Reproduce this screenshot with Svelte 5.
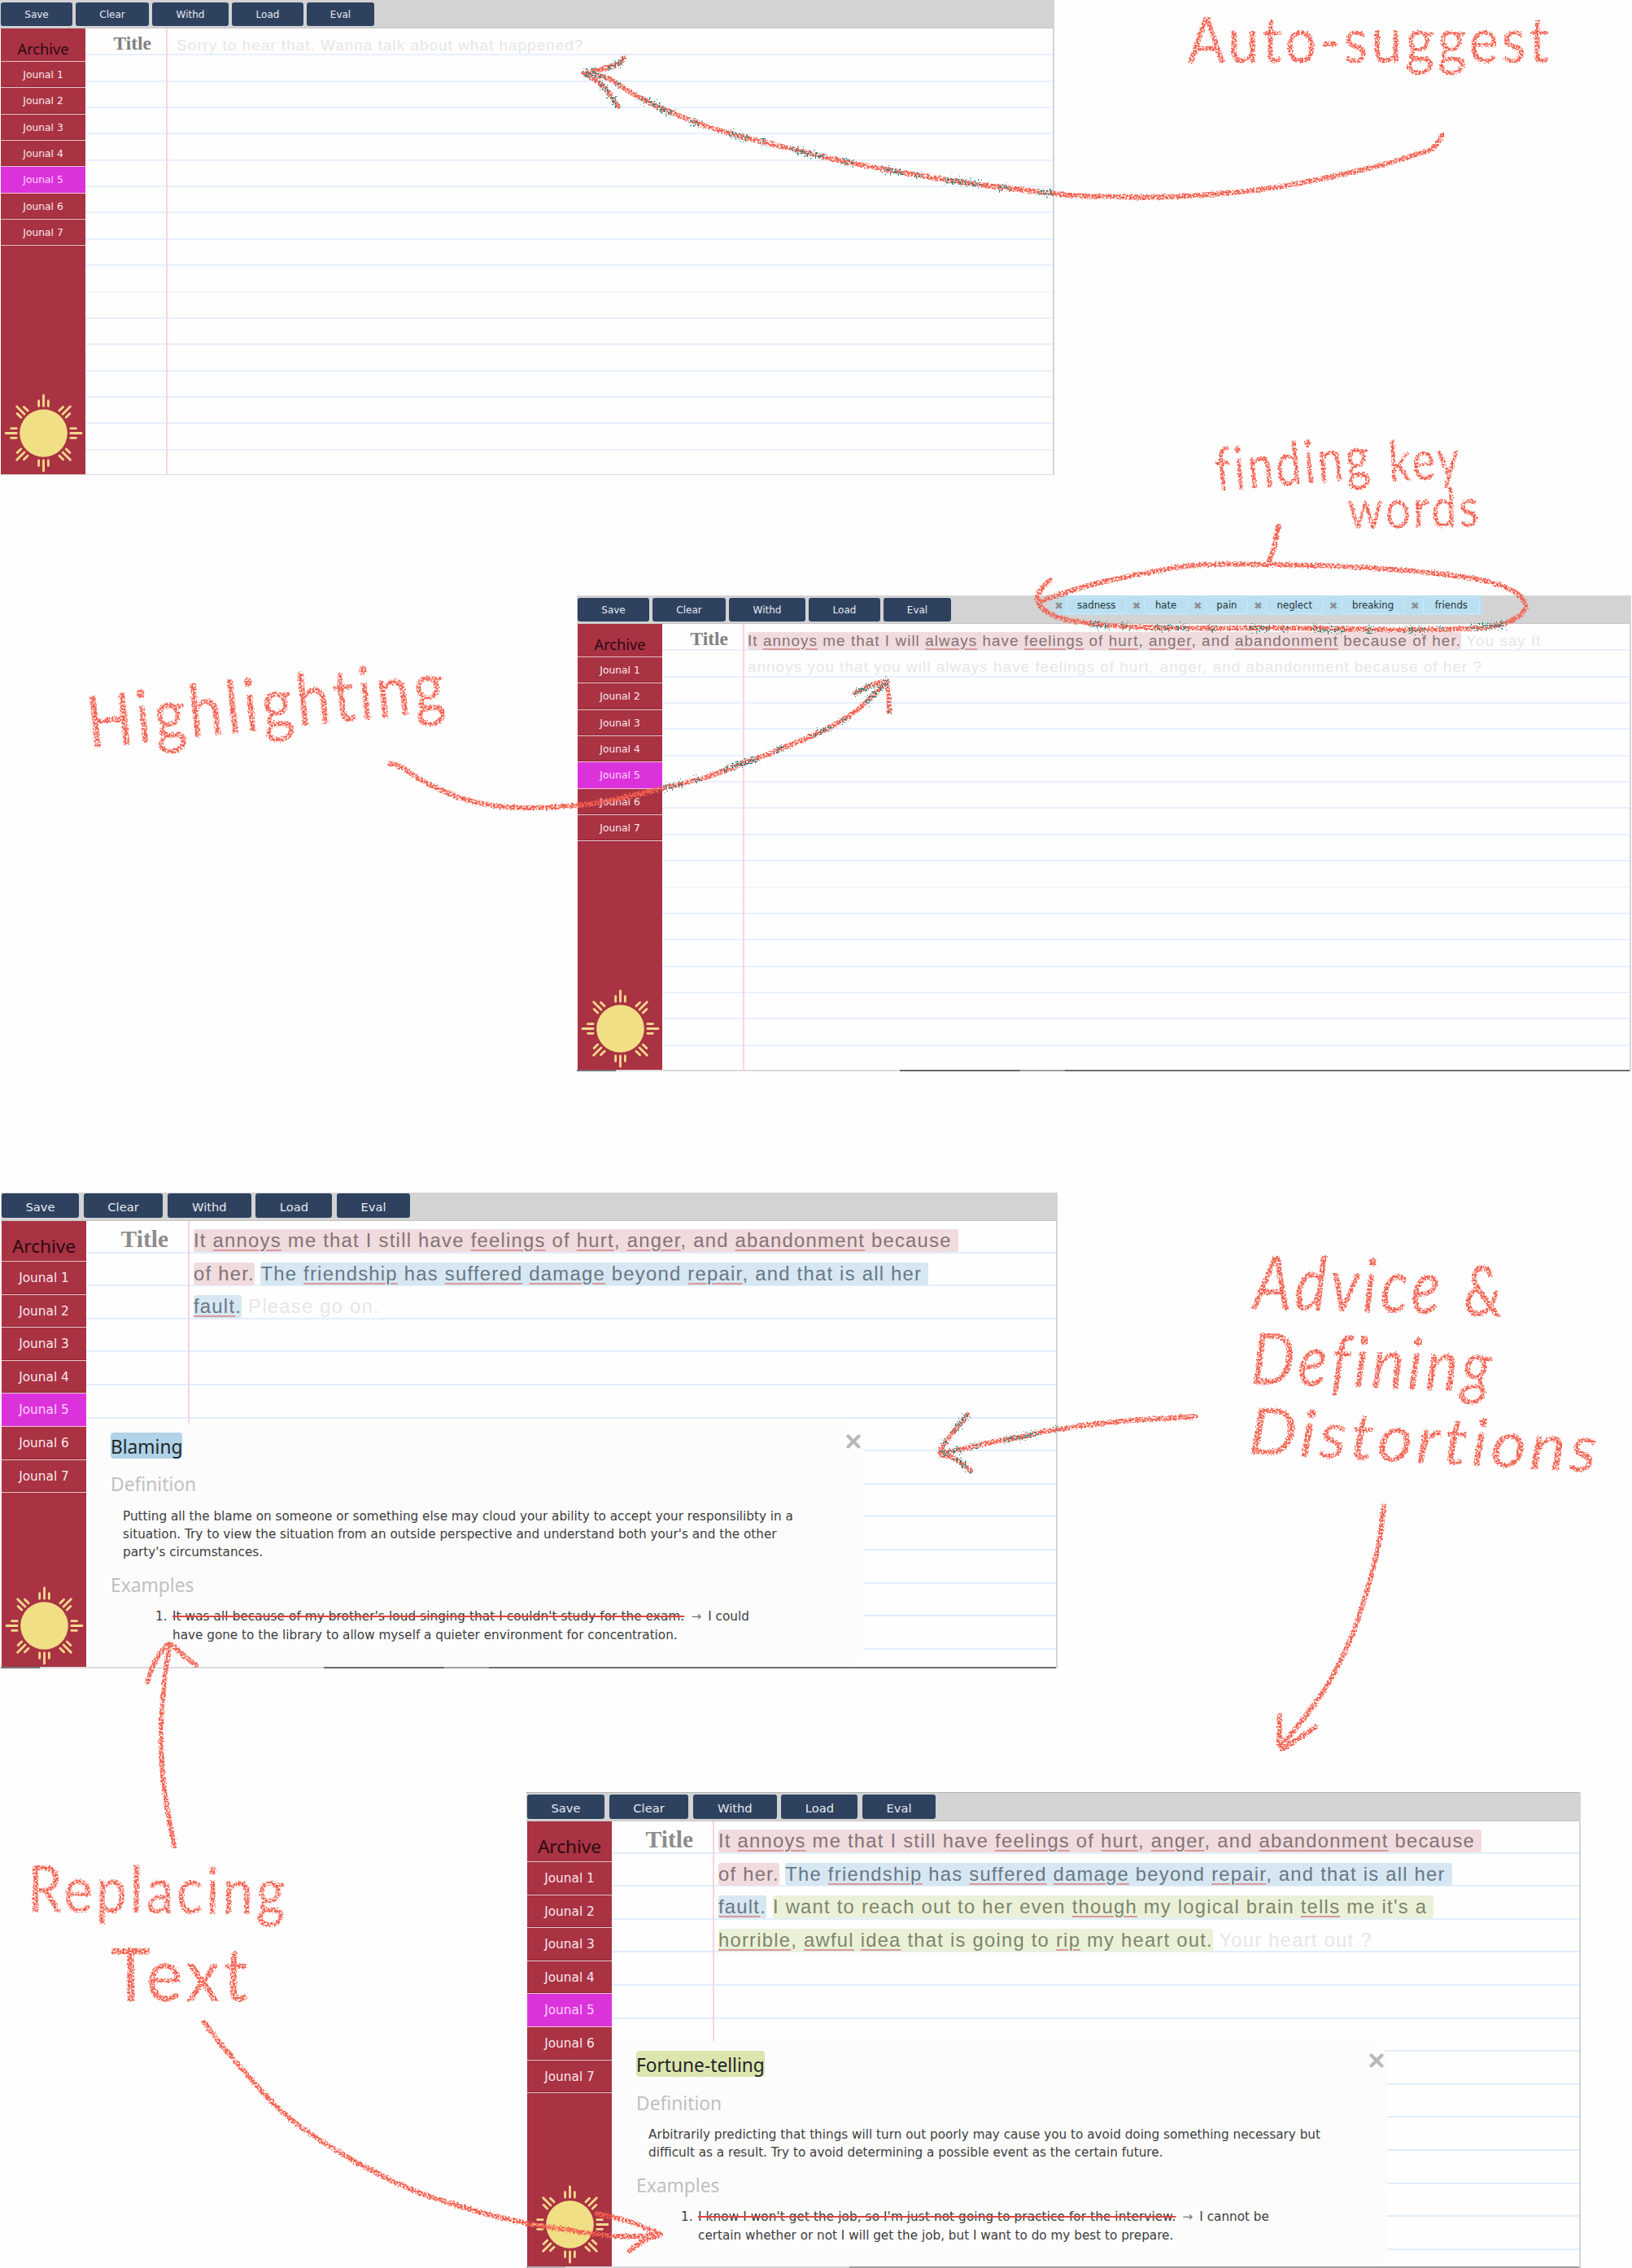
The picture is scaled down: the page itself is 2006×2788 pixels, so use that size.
<script>
  const buttons = ['Save', 'Clear', 'Withd', 'Load', 'Eval'];
  const journals = [1, 2, 3, 4, 5, 6, 7];
  const rays = [0, 45, 90, 135, 180, 225, 270, 315];

  // Words between asterisks are underlined keywords.
  const split = (text) => text.split('*').map((t, i) => ({ t, key: i % 2 === 1 }));

  const still = [
    [{ tone: 'pink', text: 'It *annoys* me that I still have *feelings* of *hurt*, *anger*, and *abandonment* because\u00a0' }],
    [
      { tone: 'pink', text: 'of her.' },
      { tone: 'blue', text: 'The *friendship* has *suffered* *damage* beyond *repair*, and that is all her\u00a0' }
    ]
  ];

  const panels = [
    {
      name: 'one',
      size: 'small',
      tags: [],
      lines: [[{ tone: 'ghost', text: 'Sorry to hear that. Wanna talk about what happened?' }]]
    },
    {
      name: 'two',
      size: 'small',
      tags: ['sadness', 'hate', 'pain', 'neglect', 'breaking', 'friends'],
      lines: [
        [
          { tone: 'pink', text: 'It *annoys* me that I will *always* have *feelings* of *hurt*, *anger*, and *abandonment* because of her.' },
          { tone: 'ghost', text: 'You say It' }
        ],
        [{ tone: 'ghost', text: 'annoys you that you will always have feelings of hurt, anger, and abandonment because of her ?' }]
      ]
    },
    {
      name: 'three',
      size: 'large',
      tags: [],
      lines: [...still, [{ tone: 'blue', text: '*fault*.' }, { tone: 'ghost', text: 'Please go on.' }]],
      advice: {
        title: 'Blaming',
        tone: 'sky',
        definition: [
          'Putting all the blame on someone or something else may cloud your ability to accept your responsilibty in a',
          "situation. Try to view the situation from an outside perspective and understand both your's and the other",
          "party's circumstances."
        ],
        wrong: "It was all because of my brother's loud singing that I couldn't study for the exam.",
        right: 'I could',
        rest: 'have gone to the library to allow myself a quieter environment for concentration.'
      }
    },
    {
      name: 'four',
      size: 'large',
      tags: [],
      lines: [
        ...still,
        [
          { tone: 'blue', text: '*fault*.' },
          { tone: 'green', text: "I want to reach out to her even *though* my logical brain *tells* me it's a\u00a0" }
        ],
        [
          { tone: 'green', text: '*horrible*, *awful* *idea* that is going to *rip* my heart out.' },
          { tone: 'ghost', text: 'Your heart out ?' }
        ]
      ],
      advice: {
        title: 'Fortune-telling',
        tone: 'lime',
        definition: [
          'Arbitrarily predicting that things will turn out poorly may cause you to avoid doing something necessary but',
          'difficult as a result. Try to avoid determining a possible event as the certain future.'
        ],
        wrong: "I know I won't get the job, so I'm just not going to practice for the interview.",
        right: 'I cannot be',
        rest: 'certain whether or not I will get the job, but I want to do my best to prepare.'
      }
    }
  ];

  // Smooth curve through a list of points (Catmull-Rom to Bezier).
  function curve(p) {
    let d = `M${p[0][0]} ${p[0][1]}`;
    for (let i = 0; i < p.length - 1; i++) {
      const a = p[i - 1] ?? p[i];
      const b = p[i];
      const c = p[i + 1];
      const e = p[i + 2] ?? c;
      d += `C${b[0] + (c[0] - a[0]) / 6} ${b[1] + (c[1] - a[1]) / 6} ${c[0] - (e[0] - b[0]) / 6} ${c[1] - (e[1] - b[1]) / 6} ${c[0]} ${c[1]}`;
    }
    return d;
  }

  const strokes = [
    [[1772, 166], [1767, 176], [1750, 187], [1673, 209], [1576, 229], [1511, 237], [1433, 242], [1340, 241], [1295, 238], [1176, 223], [1060, 203], [997, 189], [894, 163], [850, 148], [810, 132], [774, 113], [747, 96], [718, 90]],
    [[767, 71], [757, 80], [718, 90]],
    [[718, 90], [740, 105], [760, 131]],
    [[480, 939], [492, 942], [523, 962], [570, 982], [611, 991], [651, 993], [711, 990], [745, 985], [815, 969], [872, 954], [914, 938], [959, 921], [1008, 900], [1044, 880], [1070, 858], [1090, 838]],
    [[1051, 852], [1072, 842], [1090, 838]],
    [[1090, 838], [1092, 855], [1093, 875]],
    [[1571, 647], [1566, 672], [1559, 693]],
    [[1291, 713], [1280, 724], [1276, 740], [1298, 758], [1356, 768], [1443, 772], [1587, 772], [1732, 774], [1828, 771], [1866, 758], [1875, 743], [1857, 725], [1804, 710], [1684, 698], [1559, 694], [1467, 695], [1395, 707], [1337, 720], [1281, 738]],
    [[1470, 1741], [1440, 1743], [1370, 1748], [1300, 1757], [1256, 1766], [1220, 1773], [1156, 1787]],
    [[1189, 1739], [1163, 1772], [1156, 1787], [1174, 1793], [1193, 1808]],
    [[1701, 1851], [1694, 1902], [1675, 1973], [1653, 2031], [1624, 2083], [1575, 2147]],
    [[1573, 2109], [1573, 2130], [1575, 2149], [1596, 2137], [1617, 2123]],
    [[214, 2269], [202, 2201], [198, 2126], [203, 2060], [208, 2026]],
    [[181, 2068], [190, 2044], [207, 2021], [223, 2033], [241, 2047]],
    [[251, 2486], [286, 2530], [349, 2598], [421, 2648], [505, 2691], [589, 2719], [648, 2733], [698, 2741], [756, 2749], [812, 2747]],
    [[734, 2721], [774, 2731], [812, 2747]],
    [[812, 2747], [792, 2754], [774, 2767]]
  ];

  // Darker flecks where strokes run over paper.
  const flecks = [
    [[767, 71], [757, 80], [718, 90], [740, 105], [760, 131]],
    [[718, 90], [747, 96], [774, 113], [810, 132], [850, 148], [894, 163], [997, 189], [1060, 203], [1176, 223], [1295, 238]],
    [[815, 969], [872, 954], [914, 938], [959, 921], [1008, 900], [1044, 880], [1070, 858], [1090, 838]],
    [[1051, 852], [1072, 842], [1090, 838], [1093, 875]],
    [[1340, 768], [1443, 772], [1587, 773], [1732, 775], [1850, 768]],
    [[1189, 1739], [1161, 1772], [1156, 1787], [1174, 1793], [1193, 1808]],
    [[1156, 1787], [1220, 1773], [1256, 1766], [1300, 1757]]
  ];

  const notes = [
    { t: 'Auto-suggest', x: 1460, y: 77, w: 448, s: 77, r: 0 },
    { t: 'Highlighting', x: 110, y: 920, w: 446, s: 90, r: -6 },
    { t: 'finding', x: 1496, y: 604, w: 193, s: 74, r: -5 },
    { t: 'key', x: 1708, y: 592, w: 90, s: 68, r: -3 },
    { t: 'words', x: 1657, y: 650, w: 164, s: 66, r: -1 },
    { t: 'Advice', x: 1540, y: 1609, w: 234, s: 92, r: 1.5, slant: true },
    { t: '&', x: 1798, y: 1617, w: 52, s: 86, r: 2 },
    { t: 'Defining', x: 1537, y: 1701, w: 300, s: 88, r: 2, slant: true },
    { t: 'Distortions', x: 1534, y: 1787, w: 433, s: 80, r: 3, slant: true },
    { t: 'Replacing', x: 34, y: 2350, w: 320, s: 80, r: 0.6 },
    { t: 'Text', x: 136, y: 2460, w: 174, s: 92, r: 0 }
  ];
</script>

<main class="board">
  {#each panels as p}
    <section class="panel {p.name} {p.size}">
      <header class="toolbar">
        {#each buttons as b, i}<button class="btn b{i}">{b}</button>{/each}
        {#if p.tags.length}
          <div class="tags">
            {#each p.tags as tag}<span class="tag"><span class="cross">✖</span><span class="chip">{tag}</span></span>{/each}
          </div>
        {/if}
      </header>
      <div class="body">
        <nav class="side">
          <div class="archive">Archive</div>
          {#each journals as n}<div class="journal" class:active={n === 5}>Jounal {n}</div>{/each}
          <svg class="sun" viewBox="-48 -48 96 96">
            <circle r="29" fill="#f1df86" />
            {#each rays as a}
              <path d="M0-33V-46M-5.8-33V-39.500M5.8-33V-39.500" transform="rotate({a})" />
            {/each}
          </svg>
        </nav>
        <div class="paper">
          <div class="title">Title</div>
          <div class="entry">
            {#each p.lines as line}
              <p class="line">{#each line as seg, i}{i ? ' ' : ''}<span class="seg {seg.tone}">{#each split(seg.text) as part}{#if part.key}<span class="kw">{part.t}</span>{:else}{part.t}{/if}{/each}</span>{/each}</p>
            {/each}
          </div>
          {#if p.advice}
            <aside class="advice">
              <svg class="close" viewBox="0 0 18 18"><path d="M2.5 2.5l13 13M15.5 2.5l-13 13" /></svg>
              <h2><span class={p.advice.tone}>{p.advice.title}</span></h2>
              <h3>Definition</h3>
              <div class="definition">{#each p.advice.definition as d}<p>{d}</p>{/each}</div>
              <h3 class="second">Examples</h3>
              <div class="example">
                <span class="num">1.</span>
                <div>
                  <p><s>{p.advice.wrong}</s><span class="arrow">→</span>{p.advice.right}</p>
                  <p>{p.advice.rest}</p>
                </div>
              </div>
            </aside>
          {/if}
        </div>
      </div>
      <div class="edge"></div>
    </section>
  {/each}

  <svg class="ink" width="2006" height="2788" viewBox="0 0 2006 2788">
    <defs>
      <filter id="crayon" filterUnits="userSpaceOnUse" x="0" y="0" width="2006" height="2788">
        <feTurbulence type="fractalNoise" baseFrequency="0.45" numOctaves="2" seed="4" result="n" />
        <feDisplacementMap in="SourceGraphic" in2="n" scale="5" xChannelSelector="R" yChannelSelector="G" result="d" />
        <feColorMatrix in="n" type="matrix" values="0 0 0 0 0  0 0 0 0 0  0 0 0 0 0  0 0 5 0 -1.65" result="m" />
        <feComposite in="d" in2="m" operator="in" />
      </filter>
      <filter id="fleck" filterUnits="userSpaceOnUse" x="0" y="0" width="2006" height="2788">
        <feTurbulence type="fractalNoise" baseFrequency="0.5" numOctaves="2" seed="9" result="n" />
        <feDisplacementMap in="SourceGraphic" in2="n" scale="16" xChannelSelector="R" yChannelSelector="G" result="d" />
        <feColorMatrix in="n" type="matrix" values="0 0 0 0 0  0 0 0 0 0  0 0 0 0 0  0 0 14 0 -7.1" result="m" />
        <feComposite in="d" in2="m" operator="in" />
      </filter>
    </defs>
    <g filter="url(#crayon)">
      {#each strokes as s}<path class="stroke" d={curve(s)} />{/each}
      {#each notes as n}
        <text class="note" class:slant={n.slant} x={n.x} y={n.y} font-size={n.s} textLength={n.w} lengthAdjust="spacingAndGlyphs" transform="rotate({n.r} {n.x} {n.y})">{n.t}</text>
      {/each}
    </g>
    <g filter="url(#fleck)">
      {#each flecks as s}<path class="fleck" d={curve(s)} />{/each}
    </g>
  </svg>
</main>

<style>
  :global(body) { background: #fefefe; }
  .board { position: relative; width: 2006px; height: 2788px; overflow: hidden; display: flex; flex-direction: column; font-family: 'DejaVu Sans', Verdana, sans-serif; }
  p, h2, h3 { margin: 0; font-weight: 400; }

  .panel { flex: none; box-sizing: border-box; display: flex; flex-direction: column; border-right: 2px solid #d4d4d6; }
  .one { width: 1296px; height: 584px; }
  .two { width: 1296px; height: 585px; margin: 148px 0 0 709px; }
  .three { width: 1299px; height: 585px; margin: 149px 0 0 1px; }
  .four { width: 1296px; height: 585px; margin: 152px 0 0 647px; }
  .edge { flex: none; height: 2px; background: linear-gradient(90deg, #77777b 48px, #dadadc 48px 397px, #68686c 397px 545px, #a0a0a3 545px 600px, #6e6e72 600px); }
  .one .edge { height: 1px; background: #dcdcdc; }
  .four .edge { background: linear-gradient(90deg, #b0b0b2 48px, #d6d6d8 48px 397px, #a0a0a4 397px); }

  .toolbar { flex: none; box-sizing: border-box; display: flex; align-items: flex-start; height: 35px; padding: 3px 0 0 1px; background: #d3d3d3; border-bottom: 1px solid #c6c6c6; }
  .four .toolbar { border-top: 1px solid #aeb3b1; padding-top: 2px; height: 36px; }
  .three .toolbar { padding-top: 1px; }
  .btn { flex: none; height: 29px; padding: 0; border: 0; border-radius: 3px; background: #2e415f; color: #e6e9ef; font: 12px 'DejaVu Sans', Verdana, sans-serif; margin-right: 4px; }
  .small .b0 { width: 88px; }
  .small .b1 { width: 90px; }
  .small .b2 { width: 94px; }
  .small .b3 { width: 88px; }
  .small .b4 { width: 83px; }
  .large .btn { font-size: 14.7px; margin-right: 5.8px; padding-top: 3px; height: 30px; }
  .large .b0 { width: 95px; }
  .large .b1 { width: 97.5px; }
  .large .b2 { width: 102.5px; }
  .large .b3 { width: 94px; }
  .large .b4 { width: 89.5px; }

  .tags { display: flex; margin: -3px 0 0 119px; }
  .tag { display: flex; align-items: center; height: 24px; padding-right: 3px; background: #b9dff0; font-size: 11.7px; color: #26333a; }
  .tag:first-child { background: linear-gradient(90deg, #c9d8df, #b9dff0 20px); }
  .cross { width: 19px; text-align: center; color: #8b8f92; font-size: 12.5px; }
  .chip { box-sizing: border-box; height: 21px; line-height: 18px; padding: 0 12.5px; border: 1px solid #cdeaf7; border-radius: 3px; }
  .tag:first-child .chip { padding: 0 12px; }
  .tag:last-child .chip { padding: 0 14px; }

  .body { flex: 1; display: flex; min-height: 0; }
  .side { flex: none; width: 104px; margin-left: 1px; display: flex; flex-direction: column; align-items: stretch; background: #a93243; text-align: center; }
  .archive { box-sizing: border-box; height: 41px; padding-top: 13px; border-bottom: 1px solid #e9bfc5; font: 18.2px/25px 'Noto Sans', 'Open Sans', sans-serif; color: #2b0a10; }
  .journal { box-sizing: border-box; height: 32.35px; line-height: 32px; border-bottom: 1px solid #edc6cc; box-shadow: inset 0 -1px #8d2836; font-size: 12.3px; color: #f9e9ec; }
  .journal.active { background: #dc32dc; box-shadow: none; color: #fbd5fb; }
  .large .archive { height: 50px; padding-top: 15.5px; font-size: 22.6px; line-height: 30px; }
  .large .journal { height: 40.6px; line-height: 41px; font-size: 15.3px; }
  .sun { width: 97px; height: 97px; margin: auto auto 2px; flex: none; }
  .four .sun { margin-bottom: 3px; }
  .sun path { stroke: #f3d98c; stroke-width: 2.8; stroke-linecap: round; fill: none; }

  .paper { flex: 1; min-width: 0; position: relative; display: grid; grid-template-columns: 101px 1fr; background: repeating-linear-gradient(180deg, transparent 0 30.35px, #e8f0fd 30.35px 32.35px) 0 1px, #fefefe; }
  .title { border-right: 2px solid #fbd3de; padding: 5px 18px 0 0; text-align: right; font: bold 23.5px/26px 'Liberation Serif', serif; color: #808080; }
  .large .paper { grid-template-columns: 127px 1fr; background: repeating-linear-gradient(180deg, transparent 0 38.6px, #e2eefc 38.6px 40.6px) 0 -1px, #fefefe; }
  .large .title { font-size: 29.5px; line-height: 34px; padding: 5px 24px 0 0; color: #8c8c8c; }
  .four.large .paper { grid-template-columns: 126px 1fr; }
  .entry { padding: 5px 0 0 11px; font-family: 'Liberation Sans', Arial, sans-serif; font-size: 18.95px; letter-spacing: 1.01px; }
  .line { line-height: 32.35px; height: 32.35px; white-space: pre; }
  .two .entry { font-size: 18.85px; letter-spacing: 1.06px; padding-left: 4px; padding-top: 4.5px; }
  .large .entry { padding: 4px 0 0 5px; font-size: 23.85px; letter-spacing: 1.24px; }
  .four.large .entry { font-size: 23.75px; letter-spacing: 1.26px; }
  .large .line { line-height: 40.6px; height: 40.6px; }
  .seg { border-radius: 3px; padding-bottom: 1px; }
  .pink { background: #f0dcde; color: #857376; }
  .blue { background: #d7e7f2; color: #677885; }
  .green { background: #ebf1d8; color: #7e856d; }
  .ghost { color: #e6e6e8; }
  .kw { text-decoration: underline #d99a9c 1.5px; text-underline-offset: 3px; }

  .advice { position: absolute; left: 0; top: 247.5px; width: 956px; bottom: 0; box-sizing: border-box; padding: 12px 0 0 30px; border-radius: 0 24px 24px 0; background: #fcfcfc; color: #3c3c3c; font-size: 15.24px; line-height: 22.4px; white-space: nowrap; }
  .four .advice { top: 270px; width: 953px; }
  .close { position: absolute; right: 4px; top: 14.5px; width: 18px; height: 18px; }
  .close path { stroke: #b9b9bb; stroke-width: 4; stroke-linecap: round; }
  h2 { font: 22.7px/32px 'Noto Sans', 'Open Sans', sans-serif; color: #20262a; height: 32px; }
  h2 span { display: inline-block; height: 32px; line-height: 35px; border-radius: 4px; }
  .sky { background: #b1d2e7; }
  .lime { background: #dde5ae; }
  h3 { font: 22.8px/30px 'Noto Sans', 'Open Sans', sans-serif; color: #c0c0c2; margin-top: 17.5px; height: 30px; }
  h3.second { margin-top: 14px; }
  .definition { padding-left: 15px; margin-top: 12.5px; }
  .example { display: flex; margin-top: 12.5px; padding-left: 55px; }
  .num { width: 21px; }
  s { text-decoration: line-through #e0443e 2px; letter-spacing: 0.1px; }
  .arrow { display: inline-block; width: 29px; text-align: center; color: #777; }

  .ink { position: absolute; inset: 0; pointer-events: none; }
  .stroke { fill: none; stroke: #f4604f; stroke-width: 6; stroke-linecap: round; stroke-linejoin: round; }
  .fleck { fill: none; stroke: #0f8585; stroke-width: 7; stroke-dasharray: 26 14 8 30 44 22 12 38; }
  .note { font-family: Lato, sans-serif; font-weight: 400; letter-spacing: 0.06em; fill: #f4604f; }
  .note.slant { font-style: italic; }
</style>
